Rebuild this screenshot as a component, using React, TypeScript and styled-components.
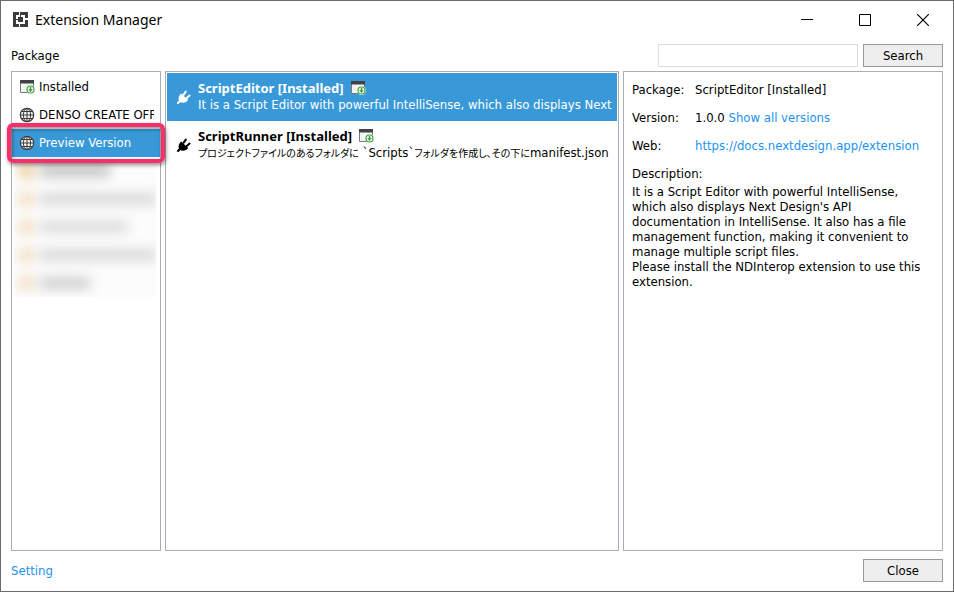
import React from "react";
import styled, { createGlobalStyle } from "styled-components";

const GlobalStyle = createGlobalStyle`
  *, *::before, *::after { box-sizing: border-box; }
  html, body, #root { height: 100%; }
  body {
    margin: 0;
    background: #fff;
    color: #000;
    font: 13px/16px "DejaVu Sans Condensed", "Noto Sans", "Noto Sans CJK JP", sans-serif;
  }
  h1, h2, h3, p, ul, dl, dd { margin: 0; padding: 0; font: inherit; }
  button, input { font: inherit; color: inherit; border-radius: 0; }
  svg { display: block; flex: none; }
`;

const Window = styled.div`
  display: flex;
  flex-direction: column;
  min-height: 100%;
  border: 1px solid #6b6b6b;
`;

const TitleBar = styled.header`
  display: flex;
  align-items: center;
  height: 37px;
  padding-left: 12px;
  gap: 7px;
`;

const Title = styled.h1`
  && { font: 14px/20px "Noto Sans", sans-serif; }
  flex: 1;
`;

const WindowButtons = styled.div`
  display: flex;
  padding-right: 1px;
`;

const WindowButton = styled.button`
  display: grid;
  place-items: center;
  width: 58px;
  height: 36px;
  padding: 0;
  border: 0;
  background: transparent;
`;

const SearchBar = styled.form`
  display: flex;
  align-items: center;
  gap: 5px;
  padding: 6px 10px 4px;
`;

const SearchLabel = styled.label`
  flex: 1;
`;

const SearchInput = styled.input`
  width: 200px;
  height: 23px;
  padding: 0 4px;
  border: 1px solid #dcdcdc;
  background: #fff;
`;

const PushButton = styled.button`
  width: 80px;
  height: 23px;
  padding: 0;
  border: 1px solid #999;
  background: #eee;
  line-height: 20px;
`;

const Panels = styled.main`
  display: grid;
  grid-template-columns: 150px minmax(0, 1fr) 320px;
  gap: 4px;
  flex: 1;
  padding: 0 10px;
`;

const Panel = styled.section`
  min-width: 0;
  border: 1px solid #abadb3;
`;

const SourceList = styled.ul`
  list-style: none;
  padding-top: 1px;
`;

const SourceItem = styled.li`
  position: relative;
`;

const SourceButton = styled.button<{ $selected?: boolean }>`
  display: flex;
  align-items: center;
  gap: 4px;
  width: 100%;
  height: 28px;
  padding: 0 6px 0 7px;
  border: 0;
  background: ${(p) => (p.$selected ? "#3999d8" : "transparent")};
  color: ${(p) => (p.$selected ? "#fff" : "#000")};
  text-align: left;
`;

const SourceName = styled.span`
  overflow: hidden;
  white-space: nowrap;
`;

const Highlight = styled.span`
  position: absolute;
  z-index: 1;
  inset: -6px -5px;
  border: 4px solid #fb2e6c;
  border-radius: 6px;
  box-shadow: 1px 2px 4px rgba(0, 0, 0, 0.45), inset 1px 2px 4px rgba(0, 0, 0, 0.45);
  pointer-events: none;
`;

const Hidden = styled.div`
  margin: 0 4px 0 2px;
  overflow: hidden;
  background: #fcfcfc;
`;

const HiddenRow = styled.div`
  display: flex;
  align-items: center;
  gap: 6px;
  height: 28px;
  padding-left: 5px;
  filter: blur(6px);
`;

const HiddenIcon = styled.span<{ $strong?: boolean }>`
  width: 15px;
  height: 14px;
  background: ${(p) => (p.$strong ? "#efd0a0" : "#f3dfc2")};
`;

const HiddenText = styled.span<{ $width: number; $color: string }>`
  width: ${(p) => p.$width}px;
  height: 12px;
  background: ${(p) => p.$color};
`;

const PackageList = styled.ul`
  list-style: none;
  padding: 1px;
`;

const PackageButton = styled.button<{ $selected?: boolean }>`
  display: flex;
  align-items: center;
  gap: 6px;
  width: 100%;
  height: 48px;
  padding: 0 2px 0 9px;
  border: 0;
  background: ${(p) => (p.$selected ? "#3999d8" : "transparent")};
  color: ${(p) => (p.$selected ? "#fff" : "#000")};
  text-align: left;
`;

const PackageText = styled.span`
  flex: 1;
  min-width: 0;
`;

const PackageName = styled.span`
  display: flex;
  align-items: center;
  gap: 6px;
  font-family: "Noto Sans", sans-serif;
  font-weight: 700;
`;

const PackageSummary = styled.span`
  display: block;
  overflow: hidden;
  line-height: 18px;
  white-space: nowrap;
`;

const Japanese = styled.span`
  font-family: "Noto Sans CJK JP", sans-serif;
  font-size: 10px;
  line-height: 16px;
  font-feature-settings: "palt";
`;

const Details = styled(Panel)`
  padding: 10px 18px 10px 8px;
`;

const Facts = styled.dl`
  display: grid;
  grid-template-columns: 63px minmax(0, 1fr);
  row-gap: 12px;
`;

const FactValue = styled.dd`
  overflow: hidden;
  white-space: nowrap;
`;

const DescriptionTitle = styled.h2`
  && { margin-top: 12px; }
`;

const Description = styled.p`
  && { margin-top: 2px; line-height: 15px; }
`;

const Link = styled.a`
  color: #1a93f0;
  text-decoration: none;
`;

const Footer = styled.footer`
  display: flex;
  align-items: center;
  justify-content: space-between;
  padding: 8px 10px 9px;
`;

const AppIcon = () => (
  <svg width="15" height="15" viewBox="0 0 15 15" fill="#3c3c3c" aria-hidden="true">
    <path d="M0 0H6V3H3V12H6V15H0Z" />
    <path d="M7 0H15V6H12V3H7Z" />
    <path d="M12 8H15V15H7V12H12Z" />
    <path d="M5 5H10V10H5Z" />
    <path d="M7 3h1v2H7zM3 7h2v1H3z" />
  </svg>
);

const GlobeIcon = () => (
  <svg width="16" height="16" viewBox="0 0 16 16" fill="none" stroke="#3a3a3a" aria-hidden="true">
    <circle cx="8" cy="8" r="7.200" fill="#f6f6f6" stroke="none" />
    <circle cx="8" cy="8" r="6.700" strokeWidth="1.200" />
    <ellipse cx="8" cy="8" rx="3.600" ry="6.700" />
    <path d="M8 1V15M1 8H15M2.300 4.500H13.700M2.300 11.500H13.700" />
  </svg>
);

const InstalledIcon = () => (
  <svg width="16" height="14" viewBox="0 0 16 14" aria-hidden="true">
    <path d="M1.500.5H14.500V12.500H1.500Z" fill="#f4f4f4" stroke="#77787c" />
    <path d="M1 0H15V3.500H1Z" fill="#414246" />
    <circle cx="11.500" cy="9.500" r="4.500" fill="#fff" />
    <circle cx="11.500" cy="9.500" r="3.500" fill="#fff" stroke="#3c9f40" strokeWidth="1.200" />
    <path d="M10.700 7h1.600v2.200h1.500l-2.300 2.700-2.300-2.700h1.500z" fill="#3c9f40" />
  </svg>
);

const PlugIcon = () => (
  <svg width="16" height="16" viewBox="0 0 16 16" fill="currentColor" aria-hidden="true">
    <path d="M5.200 4.600 12.200 11C10.500 13.200 8 14.200 5.500 13.600L4.500 13.100 2.500 15 .8 14.600 1.200 13.200 2.800 11.700C2 9 3 6.200 5.200 4.600Z" />
    <path d="M7.500 5.800 9.800 2.600M10.800 9 13.600 6.600" stroke="currentColor" strokeWidth="2" strokeLinecap="round" />
  </svg>
);

const hiddenRows = [
  { width: 70, color: "#c4c4c4", strong: true },
  { width: 118, color: "#d9d9d9" },
  { width: 88, color: "#dcdcdc" },
  { width: 118, color: "#d9d9d9" },
  { width: 50, color: "#d0d0d0" },
];

export default function App() {
  return (
    <>
      <GlobalStyle />
      <Window>
        <TitleBar>
          <AppIcon />
          <Title>Extension Manager</Title>
          <WindowButtons>
            <WindowButton type="button" aria-label="Minimize">
              <svg width="12" height="12" stroke="#000"><path d="M0 5.500H12" /></svg>
            </WindowButton>
            <WindowButton type="button" aria-label="Maximize">
              <svg width="12" height="12" fill="none" stroke="#000"><path d="M.5.5H11.500V11.500H.5Z" /></svg>
            </WindowButton>
            <WindowButton type="button" aria-label="Close window">
              <svg width="12" height="12" stroke="#000" strokeWidth="1.200"><path d="M0 0 12 12M12 0 0 12" /></svg>
            </WindowButton>
          </WindowButtons>
        </TitleBar>

        <SearchBar onSubmit={(e) => e.preventDefault()}>
          <SearchLabel htmlFor="package-search">Package</SearchLabel>
          <SearchInput id="package-search" type="text" />
          <PushButton type="submit">Search</PushButton>
        </SearchBar>

        <Panels>
          <Panel aria-label="Sources">
            <SourceList>
              <SourceItem>
                <SourceButton type="button"><InstalledIcon /><SourceName>Installed</SourceName></SourceButton>
              </SourceItem>
              <SourceItem>
                <SourceButton type="button"><GlobeIcon /><SourceName>DENSO CREATE OFFICIAL</SourceName></SourceButton>
              </SourceItem>
              <SourceItem>
                <SourceButton type="button" $selected><GlobeIcon /><SourceName>Preview Version</SourceName></SourceButton>
                <Highlight />
              </SourceItem>
            </SourceList>
            <Hidden aria-hidden="true">
              {hiddenRows.map((row, i) => (
                <HiddenRow key={i}>
                  <HiddenIcon $strong={row.strong} />
                  <HiddenText $width={row.width} $color={row.color} />
                </HiddenRow>
              ))}
            </Hidden>
          </Panel>

          <Panel aria-label="Packages">
            <PackageList>
              <li>
                <PackageButton type="button" $selected>
                  <PlugIcon />
                  <PackageText>
                    <PackageName>ScriptEditor [Installed]<InstalledIcon /></PackageName>
                    <PackageSummary>
                      It is a Script Editor with powerful IntelliSense, which also displays Next Design's API
                    </PackageSummary>
                  </PackageText>
                </PackageButton>
              </li>
              <li>
                <PackageButton type="button">
                  <PlugIcon />
                  <PackageText>
                    <PackageName>ScriptRunner [Installed]<InstalledIcon /></PackageName>
                    <PackageSummary lang="ja">
                      <Japanese>プロジェクトファイルのあるフォルダに</Japanese> `Scripts`
                      <Japanese>フォルダを作成し、その下に</Japanese>manifest.json
                    </PackageSummary>
                  </PackageText>
                </PackageButton>
              </li>
            </PackageList>
          </Panel>

          <Details aria-label="Package details">
            <Facts>
              <dt>Package:</dt>
              <FactValue>ScriptEditor [Installed]</FactValue>
              <dt>Version:</dt>
              <FactValue>1.0.0 <Link href="#versions">Show all versions</Link></FactValue>
              <dt>Web:</dt>
              <FactValue><Link href="https://docs.nextdesign.app/extension">https://docs.nextdesign.app/extension</Link></FactValue>
            </Facts>
            <DescriptionTitle>Description:</DescriptionTitle>
            <Description>
              It is a Script Editor with powerful IntelliSense, which also displays Next Design's API
              documentation in IntelliSense. It also has a file management function, making it convenient to
              manage multiple script files.
              <br />
              Please install the NDInterop extension to use this extension.
            </Description>
          </Details>
        </Panels>

        <Footer>
          <Link href="#setting">Setting</Link>
          <PushButton type="button">Close</PushButton>
        </Footer>
      </Window>
    </>
  );
}
